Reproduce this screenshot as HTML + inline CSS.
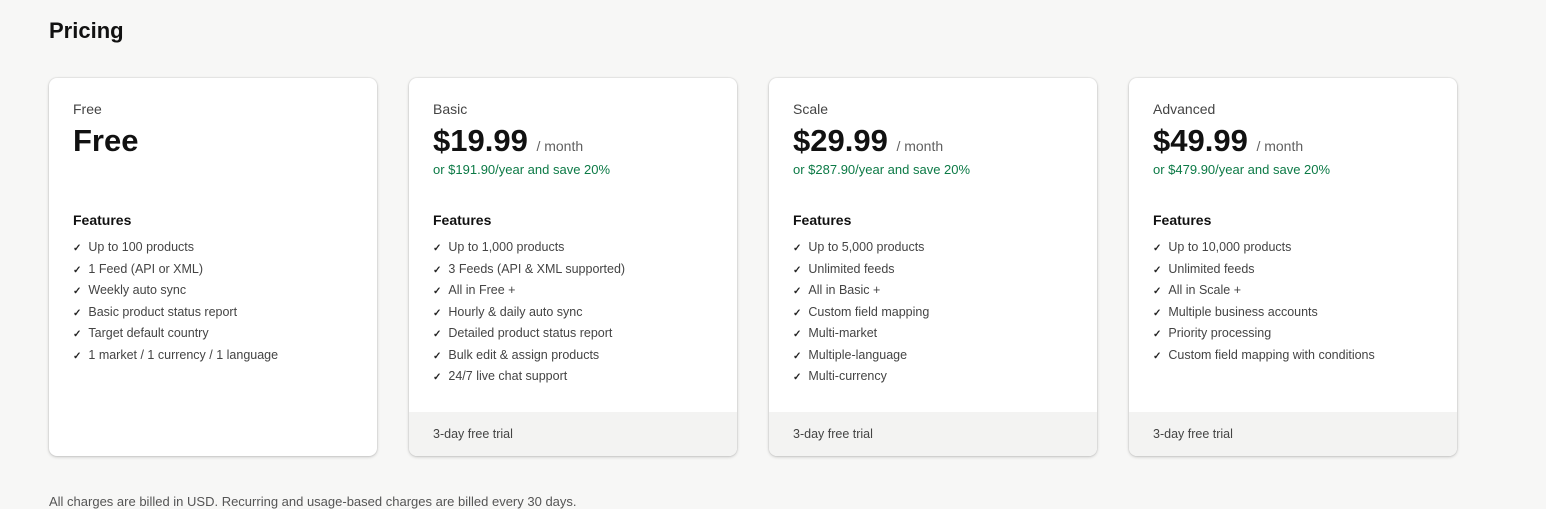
<!DOCTYPE html><html><head><style>
body{margin:0;width:1546px;height:498px;overflow:hidden;background:#f7f7f6;font-family:"Liberation Sans",sans-serif;color:#303030;position:relative}
h1{position:absolute;left:49px;top:18px;margin:0;font-size:22px;font-weight:bold;color:#111}
.card{position:absolute;top:78px;width:328px;height:378px;background:#fff;border-radius:8px;box-shadow:0 1px 3px rgba(0,0,0,.2),0 0 0 1px rgba(0,0,0,.04);overflow:hidden}
.name{position:absolute;left:24px;top:23px;font-size:14px;color:#444}
.price{position:absolute;left:24px;top:45px;font-size:31px;font-weight:bold;color:#111;white-space:nowrap}
.price span{font-size:14px;font-weight:normal;color:#616161}
.save{position:absolute;left:24px;top:84px;font-size:13px;color:#0c7a46}
.feat{position:absolute;left:24px;top:134px;font-size:14px;font-weight:bold;color:#111}
ul{position:absolute;left:24px;top:161px;margin:0;padding:0;list-style:none;font-size:12.5px;color:#444}
li{height:21.5px;line-height:17px}
li:before{content:"✓";font-size:10px;font-weight:bold;color:#222;margin-right:7px}
.foot{position:absolute;left:0;bottom:0;width:100%;height:44px;background:#f3f3f2;font-size:12.5px;color:#444;line-height:44px;text-indent:24px}
.note{position:absolute;left:49px;top:494px;font-size:13px;color:#555}
</style></head><body>
<h1>Pricing</h1>
<div class="card" style="left:49px"><div class="name">Free</div><div class="price">Free</div><div class="feat">Features</div>
<ul><li>Up to 100 products</li><li>1 Feed (API or XML)</li><li>Weekly auto sync</li><li>Basic product status report</li><li>Target default country</li><li>1 market / 1 currency / 1 language</li></ul></div>
<div class="card" style="left:409px"><div class="name">Basic</div><div class="price">$19.99 <span>/ month</span></div><div class="save">or $191.90/year and save 20%</div><div class="feat">Features</div>
<ul><li>Up to 1,000 products</li><li>3 Feeds (API &amp; XML supported)</li><li>All in Free +</li><li>Hourly &amp; daily auto sync</li><li>Detailed product status report</li><li>Bulk edit &amp; assign products</li><li>24/7 live chat support</li></ul><div class="foot">3-day free trial</div></div>
<div class="card" style="left:769px"><div class="name">Scale</div><div class="price">$29.99 <span>/ month</span></div><div class="save">or $287.90/year and save 20%</div><div class="feat">Features</div>
<ul><li>Up to 5,000 products</li><li>Unlimited feeds</li><li>All in Basic +</li><li>Custom field mapping</li><li>Multi-market</li><li>Multiple-language</li><li>Multi-currency</li></ul><div class="foot">3-day free trial</div></div>
<div class="card" style="left:1129px"><div class="name">Advanced</div><div class="price">$49.99 <span>/ month</span></div><div class="save">or $479.90/year and save 20%</div><div class="feat">Features</div>
<ul><li>Up to 10,000 products</li><li>Unlimited feeds</li><li>All in Scale +</li><li>Multiple business accounts</li><li>Priority processing</li><li>Custom field mapping with conditions</li></ul><div class="foot">3-day free trial</div></div>
<div class="note">All charges are billed in USD. Recurring and usage-based charges are billed every 30 days.</div>
</body></html>
